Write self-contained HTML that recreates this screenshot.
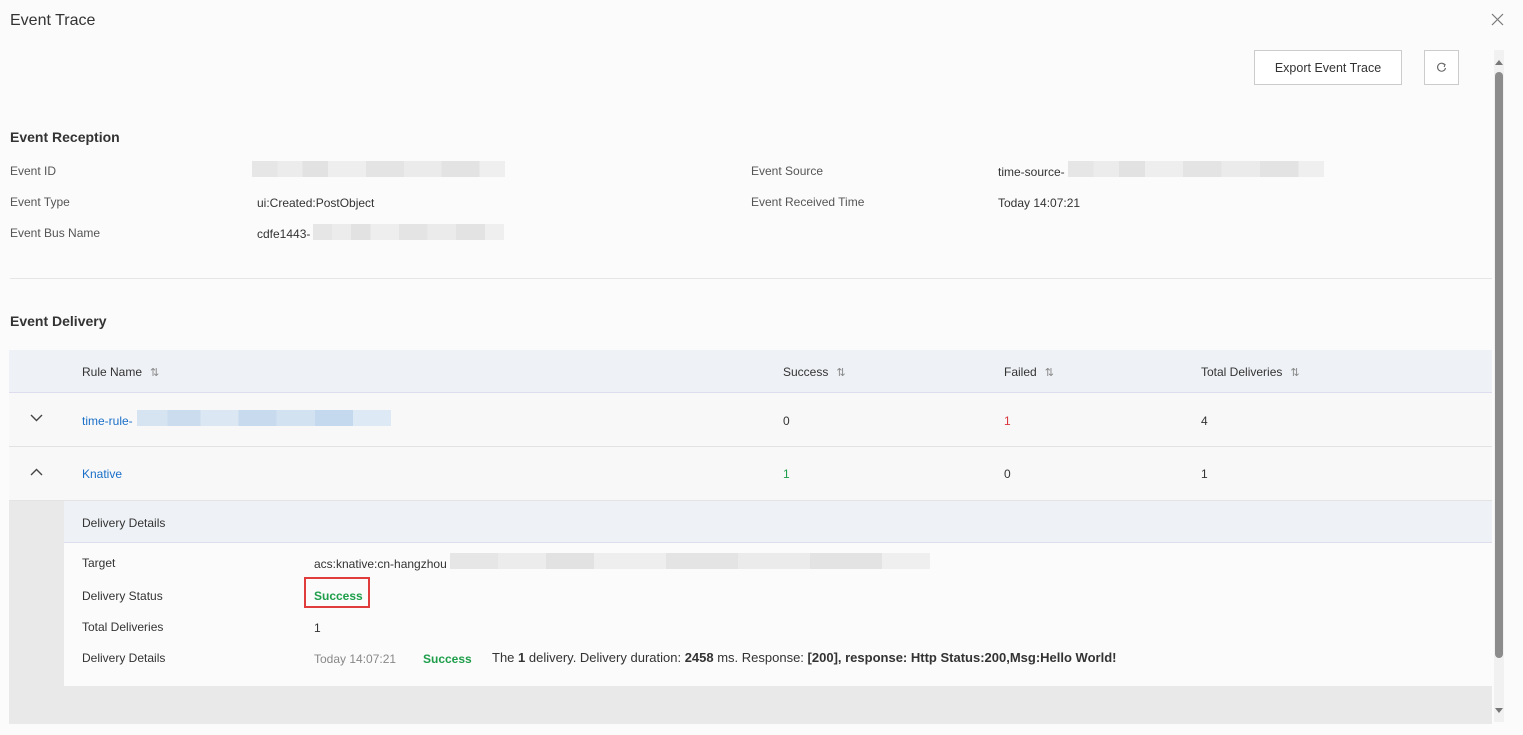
<!DOCTYPE html>
<html><head><meta charset="utf-8">
<style>
*{margin:0;padding:0;box-sizing:border-box}
body{width:1523px;height:735px;background:#fbfbfb;font-family:"Liberation Sans",sans-serif;font-size:12px;color:#333;position:relative;overflow:hidden}
.a{position:absolute;white-space:nowrap}
.t{margin-top:1px}
.blur{position:absolute;height:16px;background:linear-gradient(90deg,#e6e6e6 0 10%,#ececec 10% 20%,#e2e2e2 20% 30%,#eeeeee 30% 45%,#e4e4e4 45% 60%,#ebebeb 60% 75%,#e3e3e3 75% 90%,#efefef 90%)}
.bb{background:linear-gradient(90deg,#d6e4f2 0 12%,#cadcee 12% 25%,#dbe7f3 25% 40%,#c8dbee 40% 55%,#d3e2f1 55% 70%,#c5d9ee 70% 85%,#dde9f4 85%)}
.lbl{color:#555}
.sort{color:#888;font-size:11px;margin-left:8px}
b{font-weight:bold}
</style></head><body>
<div class="a t" style="left:10px;top:11px;font-size:16px;color:#333">Event Trace</div>
<svg class="a" style="left:1491px;top:13px" width="13" height="13"><path d="M1 1L12 12M12 1L1 12" stroke="#777" stroke-width="1.2"/></svg>
<div class="a" style="left:1254px;top:50px;width:148px;height:35px;border:1px solid #ccc;background:#fff;text-align:center;line-height:35px;font-size:12.5px;color:#333">Export Event Trace</div>
<div class="a" style="left:1424px;top:50px;width:35px;height:35px;border:1px solid #ccc;background:#fff"></div>
<svg class="a" style="left:1436px;top:62px" width="11" height="11"><path d="M8.5 2.5A4 4 0 1 0 9.5 6" fill="none" stroke="#666" stroke-width="1.1"/><path d="M6.5 1.5L9 2.5L8.2 5" fill="none" stroke="#666" stroke-width="1.1"/></svg>
<div class="a" style="left:1494px;top:50px;width:10px;height:672px;background:#f1f1f1"></div>
<svg class="a" style="left:1494px;top:58px" width="10" height="8"><path d="M1 7L5 2L9 7Z" fill="#777"/></svg>
<svg class="a" style="left:1494px;top:707px" width="10" height="8"><path d="M1 1L5 6L9 1Z" fill="#777"/></svg>
<div class="a" style="left:1495px;top:72px;width:8px;height:586px;background:#8c8c8c;border-radius:4px"></div>

<div class="a t" style="left:10px;top:128px;font-size:14px;font-weight:bold;color:#333">Event Reception</div>
<div class="a lbl t" style="left:10px;top:163px">Event ID</div>
<div class="blur" style="left:252px;top:161px;width:253px"></div>
<div class="a lbl t" style="left:10px;top:194px">Event Type</div>
<div class="a t" style="left:257px;top:195px">ui:Created:PostObject</div>
<div class="a lbl t" style="left:10px;top:225px">Event Bus Name</div>
<div class="a t" style="left:257px;top:226px">cdfe1443-</div>
<div class="blur" style="left:313px;top:224px;width:191px"></div>
<div class="a lbl t" style="left:751px;top:163px">Event Source</div>
<div class="a t" style="left:998px;top:164px">time-source-</div>
<div class="blur" style="left:1068px;top:161px;width:256px"></div>
<div class="a lbl t" style="left:751px;top:194px">Event Received Time</div>
<div class="a t" style="left:998px;top:195px">Today 14:07:21</div>
<div class="a" style="left:10px;top:278px;width:1482px;height:1px;background:#e5e5e5"></div>

<div class="a t" style="left:10px;top:312px;font-size:14px;font-weight:bold;color:#333">Event Delivery</div>
<div class="a" style="left:9px;top:350px;width:1483px;height:43px;background:#eef1f5;border-bottom:1px solid #dde"></div>
<div class="a t" style="left:82px;top:364px">Rule Name<span class="sort">⇅</span></div>
<div class="a t" style="left:783px;top:364px">Success<span class="sort">⇅</span></div>
<div class="a t" style="left:1004px;top:364px">Failed<span class="sort">⇅</span></div>
<div class="a t" style="left:1201px;top:364px">Total Deliveries<span class="sort">⇅</span></div>

<div class="a" style="left:9px;top:393px;width:1483px;height:54px;background:#f8f8f8;border-bottom:1px solid #e3e3e3"></div>
<svg class="a" style="left:30px;top:414px" width="13" height="8"><path d="M1 1L6.5 6.5L12 1" fill="none" stroke="#444" stroke-width="1.4"/></svg>
<div class="a t" style="left:82px;top:413px;color:#1a6fc8">time-rule-</div>
<div class="blur bb" style="left:137px;top:410px;width:254px"></div>
<div class="a t" style="left:783px;top:413px">0</div>
<div class="a t" style="left:1004px;top:413px;color:#d9363e">1</div>
<div class="a t" style="left:1201px;top:413px">4</div>

<div class="a" style="left:9px;top:447px;width:1483px;height:54px;background:#f8f8f8;border-bottom:1px solid #e3e3e3"></div>
<svg class="a" style="left:30px;top:468px" width="13" height="8"><path d="M1 7L6.5 1.5L12 7" fill="none" stroke="#444" stroke-width="1.4"/></svg>
<div class="a t" style="left:82px;top:466px;color:#1a6fc8">Knative</div>
<div class="a t" style="left:783px;top:466px;color:#1e9e4a">1</div>
<div class="a t" style="left:1004px;top:466px">0</div>
<div class="a t" style="left:1201px;top:466px">1</div>

<div class="a" style="left:9px;top:501px;width:1483px;height:223px;background:#e9e9e9"></div>
<div class="a" style="left:64px;top:501px;width:1428px;height:42px;background:#eef1f5;border-bottom:1px solid #dde"></div>
<div class="a t" style="left:82px;top:515px">Delivery Details</div>
<div class="a" style="left:64px;top:543px;width:1428px;height:143px;background:#fbfbfb"></div>
<div class="a t" style="left:82px;top:555px">Target</div>
<div class="a t" style="left:314px;top:556px">acs:knative:cn-hangzhou</div>
<div class="blur" style="left:450px;top:553px;width:480px"></div>
<div class="a t" style="left:82px;top:588px">Delivery Status</div>
<div class="a" style="left:304px;top:577px;width:66px;height:31px;border:2px solid #e03c3c"></div>
<div class="a t" style="left:314px;top:588px;color:#1e9e4a;font-weight:bold">Success</div>
<div class="a t" style="left:82px;top:619px">Total Deliveries</div>
<div class="a t" style="left:314px;top:620px">1</div>
<div class="a t" style="left:82px;top:650px">Delivery Details</div>
<div class="a t" style="left:314px;top:651px;color:#888">Today 14:07:21</div>
<div class="a t" style="left:423px;top:651px;color:#1e9e4a;font-weight:bold">Success</div>
<div class="a" style="left:492px;top:650px;font-size:13px">The <b>1</b> delivery. Delivery duration: <b>2458</b> ms. Response: <b>[200], response: Http Status:200,Msg:Hello World!</b></div>
</body></html>
